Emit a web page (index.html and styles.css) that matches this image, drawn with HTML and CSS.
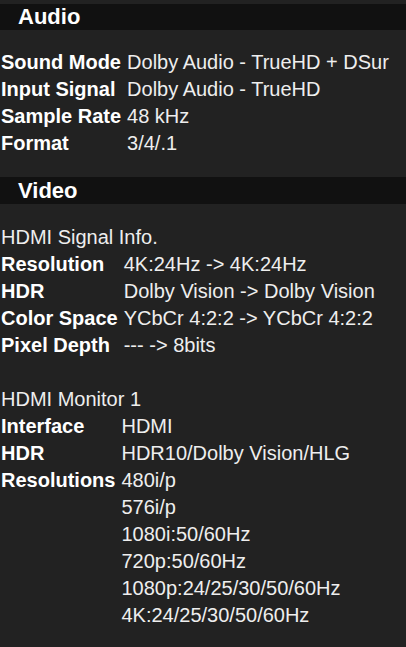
FILE: index.html
```html
<!DOCTYPE html>
<html lang="en">
<head>
  <meta charset="UTF-8">
  <title>Information</title>
  <link rel="stylesheet" href="styles.css">
</head>
<body>
  <h2 class="section-title">Audio</h2>

  <table class="info-table audio-table">
    <tr><th>Sound Mode</th><td>Dolby Audio - TrueHD + DSur</td></tr>
    <tr><th>Input Signal</th><td>Dolby Audio - TrueHD</td></tr>
    <tr><th>Sample Rate</th><td>48 kHz</td></tr>
    <tr><th>Format</th><td>3/4/.1</td></tr>
  </table>

  <h2 class="section-title video-title">Video</h2>

  <table class="info-table signal-table">
    <tr><td class="caption" colspan="2">HDMI Signal Info.</td></tr>
    <tr><th>Resolution</th><td>4K:24Hz -&gt; 4K:24Hz</td></tr>
    <tr><th>HDR</th><td>Dolby Vision -&gt; Dolby Vision</td></tr>
    <tr><th>Color Space</th><td>YCbCr 4:2:2 -&gt; YCbCr 4:2:2</td></tr>
    <tr><th>Pixel Depth</th><td>--- -&gt; 8bits</td></tr>
  </table>

  <table class="info-table monitor-table">
    <tr><td class="caption" colspan="2">HDMI Monitor 1</td></tr>
    <tr><th>Interface</th><td>HDMI</td></tr>
    <tr><th>HDR</th><td>HDR10/Dolby Vision/HLG</td></tr>
    <tr><th>Resolutions</th><td>480i/p</td></tr>
    <tr><th></th><td>576i/p</td></tr>
    <tr><th></th><td>1080i:50/60Hz</td></tr>
    <tr><th></th><td>720p:50/60Hz</td></tr>
    <tr><th></th><td>1080p:24/25/30/50/60Hz</td></tr>
    <tr><th></th><td>4K:24/25/30/50/60Hz</td></tr>
  </table>
</body>
</html>
```

FILE: styles.css
```css
body {
  margin: 0;
  background-color: #222222;
  color: #ffffff;
  font-family: "Liberation Sans", Arial, sans-serif;
  font-size: 20px;
}

.section-title {
  margin: 4px 0 0;
  padding-left: 18px;
  height: 26px;
  line-height: 26px;
  font-size: 22px;
  font-weight: bold;
  background-color: #111111;
}

.video-title {
  margin-top: 19px;
  height: 27px;
  line-height: 27px;
}

.info-table {
  margin-left: -2px;
  border-spacing: 2px;
  font-size: 20px;
}

.info-table th,
.info-table td {
  padding: 1px;
  line-height: 23px;
  vertical-align: top;
  white-space: nowrap;
}

.info-table th {
  text-align: left;
  font-weight: bold;
  color: #ffffff;
}

.info-table td {
  padding-left: 3px;
  color: #eeeeee;
}

.info-table td.caption {
  padding-left: 1px;
}

.audio-table {
  margin-top: 18px;
}

.signal-table {
  margin-top: 19px;
}

.monitor-table {
  margin-top: 25px;
}
```
